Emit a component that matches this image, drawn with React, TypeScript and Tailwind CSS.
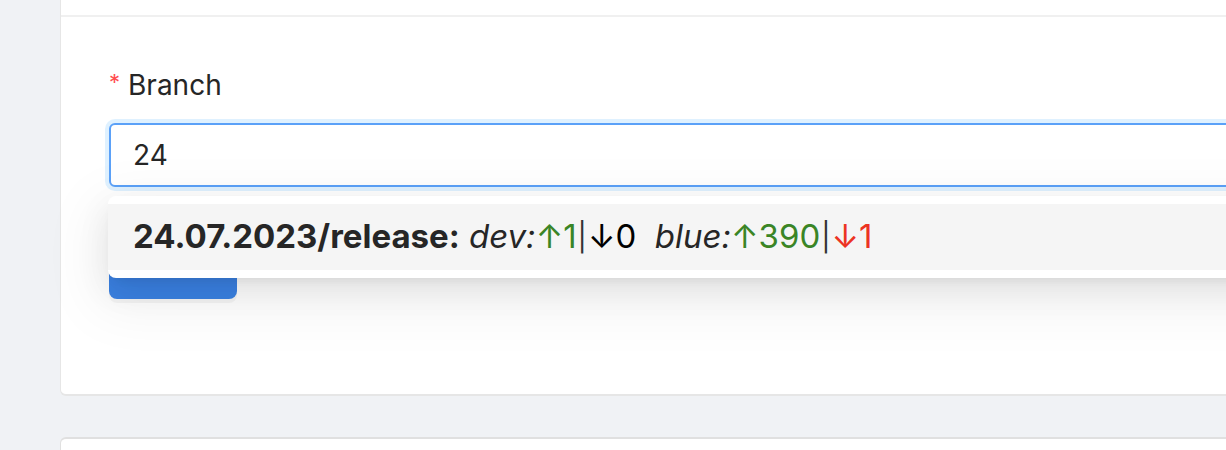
export default function App() {
  return (
    <div className="flex h-[450px] w-full overflow-hidden bg-[#f0f2f5] pl-[60px] font-['Inter','Noto_Sans',sans-serif] text-[#262626]">
      <div className="flex w-[1400px] shrink-0 flex-col">
        {/* Form card */}
        <div className="flex h-[396px] shrink-0 flex-col rounded-bl-[6px] border-b-2 border-l border-[#e6e6e6] bg-white">
          <div className="h-[17px] shrink-0 border-b-2 border-[#f0f0f0]" />
          <div className="flex flex-col px-[48px] pt-[46px]">
            <label className="flex h-[44px] items-center text-[28px] leading-[44px]">
              <span className="mr-[8px] mt-[-6px] text-[22px] text-[#ff4d4f]">*</span>
              <span>Branch</span>
            </label>

            <div className="relative mt-[16px]">
              <div className="flex h-[64px] items-center rounded-[6px] border-2 border-[#5ba1f8] bg-white px-[22px] text-[28px] shadow-[0_0_0_4px_rgba(5,145,255,0.13)]">
                24
              </div>

              {/* Autocomplete dropdown */}
              <div className="absolute left-[-1px] top-[73px] z-10 w-[1300px] rounded-[8px] bg-white py-[8px] shadow-[0_12px_32px_0_rgba(0,0,0,0.08),0_6px_12px_-8px_rgba(0,0,0,0.12),0_18px_56px_16px_rgba(0,0,0,0.05)]">
                <div className="flex h-[66px] items-center whitespace-pre bg-[#f5f5f5] px-[25px] text-[33px]">
                  <span className="font-bold">24.07.2023/release:</span>
                  <span> </span>
                  <i>dev:</i>
                  <span className="text-[#3a8526]">↑1</span>
                  <span className="px-[1px] text-[28px] text-[#333]">|</span>
                  <span className="text-black">↓0</span>
                  <span>  </span>
                  <i>blue:</i>
                  <span className="text-[#3a8526]">↑390</span>
                  <span className="px-[1px] text-[28px] text-[#333]">|</span>
                  <span className="text-[#ec3323]">↓1</span>
                </div>
              </div>
            </div>

            <button className="mt-[48px] h-[64px] w-[128px] rounded-[8px] bg-[#3b82e4] shadow-[0_4px_0_rgba(0,0,0,0.04)]" />
          </div>
        </div>

        <div className="mt-[41px] flex-1 rounded-tl-[6px] border-l border-t-2 border-[#e0e0e0] bg-white" />
      </div>
    </div>
  );
}
